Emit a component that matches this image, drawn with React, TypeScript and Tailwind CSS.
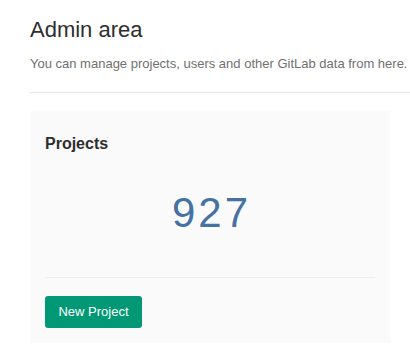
import React from "react";

export default function App() {
  return (
    <div
      className="w-[410px] h-[352px] bg-white overflow-hidden pl-[30px]"
      style={{ fontFamily: '"Liberation Sans", Arial, sans-serif' }}
    >
      <h1 className="pt-[18px] text-[22px] leading-[24px] text-[#2e2e2e] font-normal whitespace-nowrap">
        Admin area
      </h1>
      <p className="mt-[13px] text-[13px] leading-[18px] text-[#707070] whitespace-nowrap">
        You can manage projects, users and other GitLab data from here.
      </p>
      <div className="mt-[19px] h-px bg-[#e5e5e5]" />
      <div className="mt-[18px] w-[360px] bg-[#fafafa] px-[15px] pt-[22px] pb-[15px] flex flex-col">
        <h4 className="text-[16px] leading-[22px] font-bold text-[#2e2e2e]">Projects</h4>
        <div className="mt-[34px] text-center text-[42px] leading-[48px] tracking-[3px] pl-[3px] text-[#4572a2]">
          927
        </div>
        <div className="mt-[40px] h-px bg-[#eeeeee]" />
        <div className="mt-[18px] flex">
          <button className="h-[32px] w-[97px] rounded-[3px] bg-[#019875] text-white text-[13px] leading-[32px] text-center">
            New Project
          </button>
        </div>
      </div>
    </div>
  );
}
